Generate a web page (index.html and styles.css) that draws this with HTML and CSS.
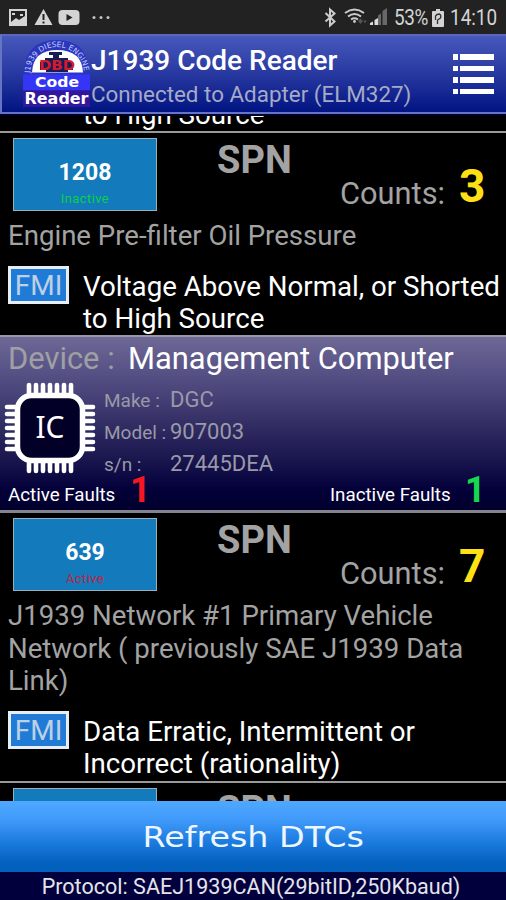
FILE: index.html
```html
<!DOCTYPE html>
<html lang="en">
<head>
<meta charset="utf-8">
<title>J1939 Code Reader</title>
<link rel="stylesheet" href="styles.css">
</head>
<body>
<div class="status">
  <svg class="status-left" width="112" height="34" viewBox="0 0 112 34">
    <rect x="10" y="10" width="16" height="15" fill="none" stroke="#d4d4d4" stroke-width="2"/>
    <path d="M11 22l5-4 3 2 6-4v8H11z" fill="#d4d4d4"/><path d="M12 13h3v2h-3zM20 14h3v2h-3z" fill="#d4d4d4"/>
    <path d="M43.500 9L52.500 25H34.500z" fill="#d4d4d4"/><path d="M42.500 14h2v6h-2zM42.500 21.500h2v2h-2z" fill="#222"/>
    <rect x="58.500" y="10" width="21" height="15" rx="4" fill="#d4d4d4"/><path d="M66.500 14l6 3.500-6 3.500z" fill="#222"/>
    <g fill="#c4c4c4"><circle cx="94" cy="17.500" r="1.500"/><circle cx="101" cy="17.500" r="1.500"/><circle cx="108" cy="17.500" r="1.500"/></g>
  </svg>
  <svg class="status-right" width="66" height="34" viewBox="323 0 66 34">
    <path d="M325.500 13l9 8.500-4.500 4V9.500l4.500 4-9 8" fill="none" stroke="#ccc" stroke-width="2"/>
    <g fill="none" stroke="#ccc" stroke-width="2"><path d="M345 13q9.500-7 19 0M348 16.500q6.500-5 13 0M351 19.500q3.500-2.500 7 0"/></g>
    <circle cx="354.500" cy="21.500" r="1.400" fill="#ccc"/><path d="M358 21l2.500-2.500 2.500 2.500-2.500 3zM363.500 20.500h3l-1.500 3z" fill="#555"/>
    <path d="M370 25v-2l3-1.500V25zM374.500 25v-5l3.500-2v7z" fill="#ddd"/><path d="M378 25v-9.500l3-2V25zM382.500 25V11l4.500-3v17z" fill="#686868"/>
  </svg>
  <span class="pct">53%</span>
  <svg class="battery" width="12" height="18" viewBox="0 0 12 18"><path d="M4 0h4v2h3q1 0 1 1v14q0 1-1 1H1q-1 0-1-1V3q0-1 1-1h3z" fill="#d4d4d4"/><path d="M3.500 11V7q1-2 4-2 2 1 1 4l-3 2v4" fill="none" stroke="#333" stroke-width="1.300"/></svg>
  <span class="clock">14:10</span>
</div>

<header class="appbar">
  <svg class="logo" width="68" height="72" viewBox="0 0 68 72">
    <path d="M1 39Q1 4 34 4 66 4 66 39z" fill="#2a36bd"/>
    <path d="M9 36.500Q10 14 34 14 59 14 60 36.500z" fill="#fff"/>
    <path d="M26 16h13v3h-3v3h9v4h5v8h-5v2H23v-2h-6v-8h5v-4h8v-3h-4z" fill="#171e55"/>
    <defs><path id="arc" d="M7 37A27 26 0 0 1 61 37"/></defs>
    <text class="logo-arc"><textPath href="#arc" textLength="81">J1939 DIESEL ENGINE</textPath></text>
    <text class="logo-dbd" x="34" y="33.500" textLength="36" lengthAdjust="spacingAndGlyphs">DBD</text>
    <rect x="0" y="38.500" width="67" height="16" fill="#3535f5"/>
    <rect x="0" y="54.500" width="67" height="16.500" fill="#33169b"/>
    <text class="logo-text" x="34" y="50.500" font-size="13.500" textLength="44" lengthAdjust="spacingAndGlyphs">Code</text>
    <text class="logo-text" x="33.500" y="68" font-size="16" textLength="64" lengthAdjust="spacingAndGlyphs">Reader</text>
  </svg>
  <div class="titles">
    <h1>J1939 Code Reader</h1>
    <p>Connected to Adapter (ELM327)</p>
  </div>
  <div class="menu"><i></i><i></i><i></i><i></i></div>
</header>

<main class="list">
  <section class="fault cut"><div class="fmi-row"><span class="fmi">FMI</span><p class="reason">Voltage Above Normal, or Shorted<br>to High Source</p></div></section>
  <section class="fault last">
    <div class="top">
      <div class="code"><b>1208</b><span class="inactive">Inactive</span></div>
      <div class="spn">SPN</div>
      <div class="counts">Counts:</div><div class="num">3</div>
    </div>
    <p class="desc">Engine Pre-filter Oil Pressure</p>
    <div class="fmi-row"><span class="fmi">FMI</span><p class="reason">Voltage Above Normal, or Shorted<br>to High Source</p></div>
  </section>
  <section class="device">
    <h2><span>Device :</span>Management Computer</h2>
    <div class="info">
      <svg class="chip" width="92" height="92" viewBox="0 0 92 92">
        <g stroke="#fff" stroke-width="4.600" stroke-linecap="round">
          <path d="M25 3v86M32 3v86M39 3v86M46 3v86M53 3v86M60 3v86M67 3v86"/>
          <path d="M3 25h86M3 32h86M3 39h86M3 46h86M3 53h86M3 60h86M3 67h86"/>
        </g>
        <rect x="13.500" y="13.500" width="65" height="65" rx="14" fill="#020026" stroke="#fff" stroke-width="5.500"/>
        <text x="46" y="56">IC</text>
      </svg>
      <dl><dt>Make :</dt><dd>DGC</dd><dt>Model :</dt><dd>907003</dd><dt>s/n :</dt><dd>27445DEA</dd></dl>
    </div>
    <div class="totals"><span class="label">Active Faults</span><b class="red">1</b><span class="label second">Inactive Faults</span><b class="green">1</b></div>
  </section>
  <section class="fault">
    <div class="top">
      <div class="code"><b>639</b><span class="active">Active</span></div>
      <div class="spn">SPN</div>
      <div class="counts">Counts:</div><div class="num">7</div>
    </div>
    <p class="desc">J1939 Network #1 Primary Vehicle<br>Network ( previously SAE J1939 Data<br>Link)</p>
    <div class="fmi-row"><span class="fmi">FMI</span><p class="reason">Data Erratic, Intermittent or<br>Incorrect (rationality)</p></div>
  </section>
  <section class="fault">
    <div class="top"><div class="code"></div><div class="spn">SPN</div></div>
  </section>
</main>
<button class="refresh"><span>Refresh DTCs</span></button>
<footer>Protocol: SAEJ1939CAN(29bitID,250Kbaud)</footer>
</body>
</html>
```
FILE: styles.css
```css
* { box-sizing: border-box; }
body { margin: 0; width: 506px; height: 900px; overflow: hidden; display: flex; flex-direction: column; background: #000; color: #fff; font-family: Roboto, "Liberation Sans", sans-serif; }
h1, h2, p, dl, dd { margin: 0; font-weight: 400; }
h1, h2, p, .top, footer { white-space: nowrap; }

.status { flex: none; height: 34px; background: #222; display: flex; align-items: flex-start; color: #d4d4d4; font-size: 21.500px; line-height: 36px; }
.status-right { margin-left: 211px; }
.pct, .clock { transform: scaleX(0.86); transform-origin: left; }
.pct { margin-left: 5px; width: 33px; font-size: 22px; letter-spacing: -0.400px; }
.battery { margin: 9px 6px 0 5px; }
.clock { transform: scaleX(0.88); }

.appbar { flex: none; position: relative; height: 80px; display: flex; border: 2px solid #6674c4; border-top-color: #5968be; border-right: 0; background: linear-gradient(#4758bc, #2738a0 50%, #021482); padding-left: 21px; box-shadow: 0 2px 0 #00002c; }
.logo { flex: none; }
.logo text { font-family: "DejaVu Sans", sans-serif; font-weight: 700; text-anchor: middle; fill: #fff; }
.logo .logo-arc { text-anchor: start; font-size: 7.500px; font-weight: 400; fill: #c8d0ff; }
.logo .logo-dbd { font-size: 14px; fill: #d8182c; }
.titles { flex: 1; }
h1 { font-size: 28px; font-weight: 500; line-height: 33px; margin-top: 8px; }
.titles p { font-size: 22.400px; line-height: 28px; margin-top: 3px; color: #a5aac6; }
.menu { width: 41px; margin: 18px 12px 0 0; display: flex; flex-direction: column; gap: 6px; }
.menu i { height: 5.500px; background: linear-gradient(90deg, #fff 5px, transparent 5px 7px, #fff 7px); }

.list { flex: 1; min-height: 0; overflow: hidden; display: flex; flex-direction: column; }
.fault { flex: none; padding: 5px 0 0 8px; border-bottom: 2px solid #999; }
.cut { height: 71px; margin-top: -52px; padding: 0 0 0 8px; }
.cut .fmi-row { margin-top: 0; }
.last { border-bottom: 0; }
.top { display: flex; height: 74px; color: #a3a3a3; }
.code { flex: none; width: 144px; height: 73px; margin-left: 5px; background: #137abb; border: 1px solid #9caeb6; display: flex; flex-direction: column; align-items: center; padding-top: 20px; }
.code b { font-size: 23px; line-height: 28px; color: #fff; font-weight: 700; }
.code span { font-size: 13px; line-height: 16px; margin-top: 4px; letter-spacing: 0.400px; }
.inactive { color: #0bd04e; }
.active { color: #c02440; }
.spn { width: 123px; margin-left: 60px; font-size: 38px; line-height: 44px; font-weight: 700; }
.counts { width: 119px; font-size: 30.800px; line-height: 36px; padding-top: 38px; }
.num { color: #ffe014; font-size: 46px; line-height: 50px; font-weight: 700; padding-top: 23px; }
.desc { color: #a3a3a3; font-size: 27.600px; line-height: 32.300px; margin-top: 8px; }
.fmi-row { display: flex; height: 70px; margin-top: 14px; }
.fmi { flex: none; width: 61px; height: 38px; border: 3px solid #e8edf3; background: #207bd7; color: #bdd0e5; font-size: 28px; line-height: 33px; text-align: center; }
.reason { margin-left: 14px; padding-top: 5px; font-size: 27.700px; line-height: 32px; }

.device { flex: none; height: 178px; margin-top: -1px; border-top: 2px solid #9996aa; border-bottom: 3px solid #85838d; background: linear-gradient(#6e6896, #555084 22%, #29255c 58%, #04003a 88%, #01002c); overflow: hidden; }
h2 { font-size: 30.900px; line-height: 36px; padding: 4px 0 0 8px; }
h2 span { display: inline-block; width: 120px; color: #a0a0a4; }
.info { display: flex; padding-left: 4px; height: 98px; }
.chip { flex: none; margin-top: 5px; }
.chip text { font: 30px "Noto Sans", sans-serif; fill: #fff; text-anchor: middle; }
dl { display: grid; grid-template-columns: 66px auto; grid-auto-rows: 32px; line-height: 32px; margin: 6px 0 0 8px; color: #9a99a8; }
dt { font-size: 19px; padding-top: 2px; white-space: nowrap; }
dd { font-size: 22px; padding-top: 1px; }
.totals { display: flex; height: 35px; padding-left: 8px; }
.label { font-size: 18.750px; line-height: 26px; padding-top: 7px; width: 122px; white-space: nowrap; }
.second { width: 135px; margin-left: 176px; }
.totals b { width: 24px; font-size: 36px; line-height: 36px; margin-top: -3px; }
.red { color: #f51821; }
.green { color: #14d84e; }

.refresh { flex: none; height: 71px; border: 0; padding: 0; color: #eef6ff; font: 29px "DejaVu Sans", sans-serif; background: linear-gradient(#4fa8ff, #419bfb 25%, #1a79dd 60%, #0460bd 88%, #0460bd); }
.refresh span { display: inline-block; transform: scaleX(1.150); }
footer { flex: none; height: 28px; background: #01003d; color: #e4e4ea; font-size: 21.550px; line-height: 30px; padding-right: 4px; text-align: center; }
```
